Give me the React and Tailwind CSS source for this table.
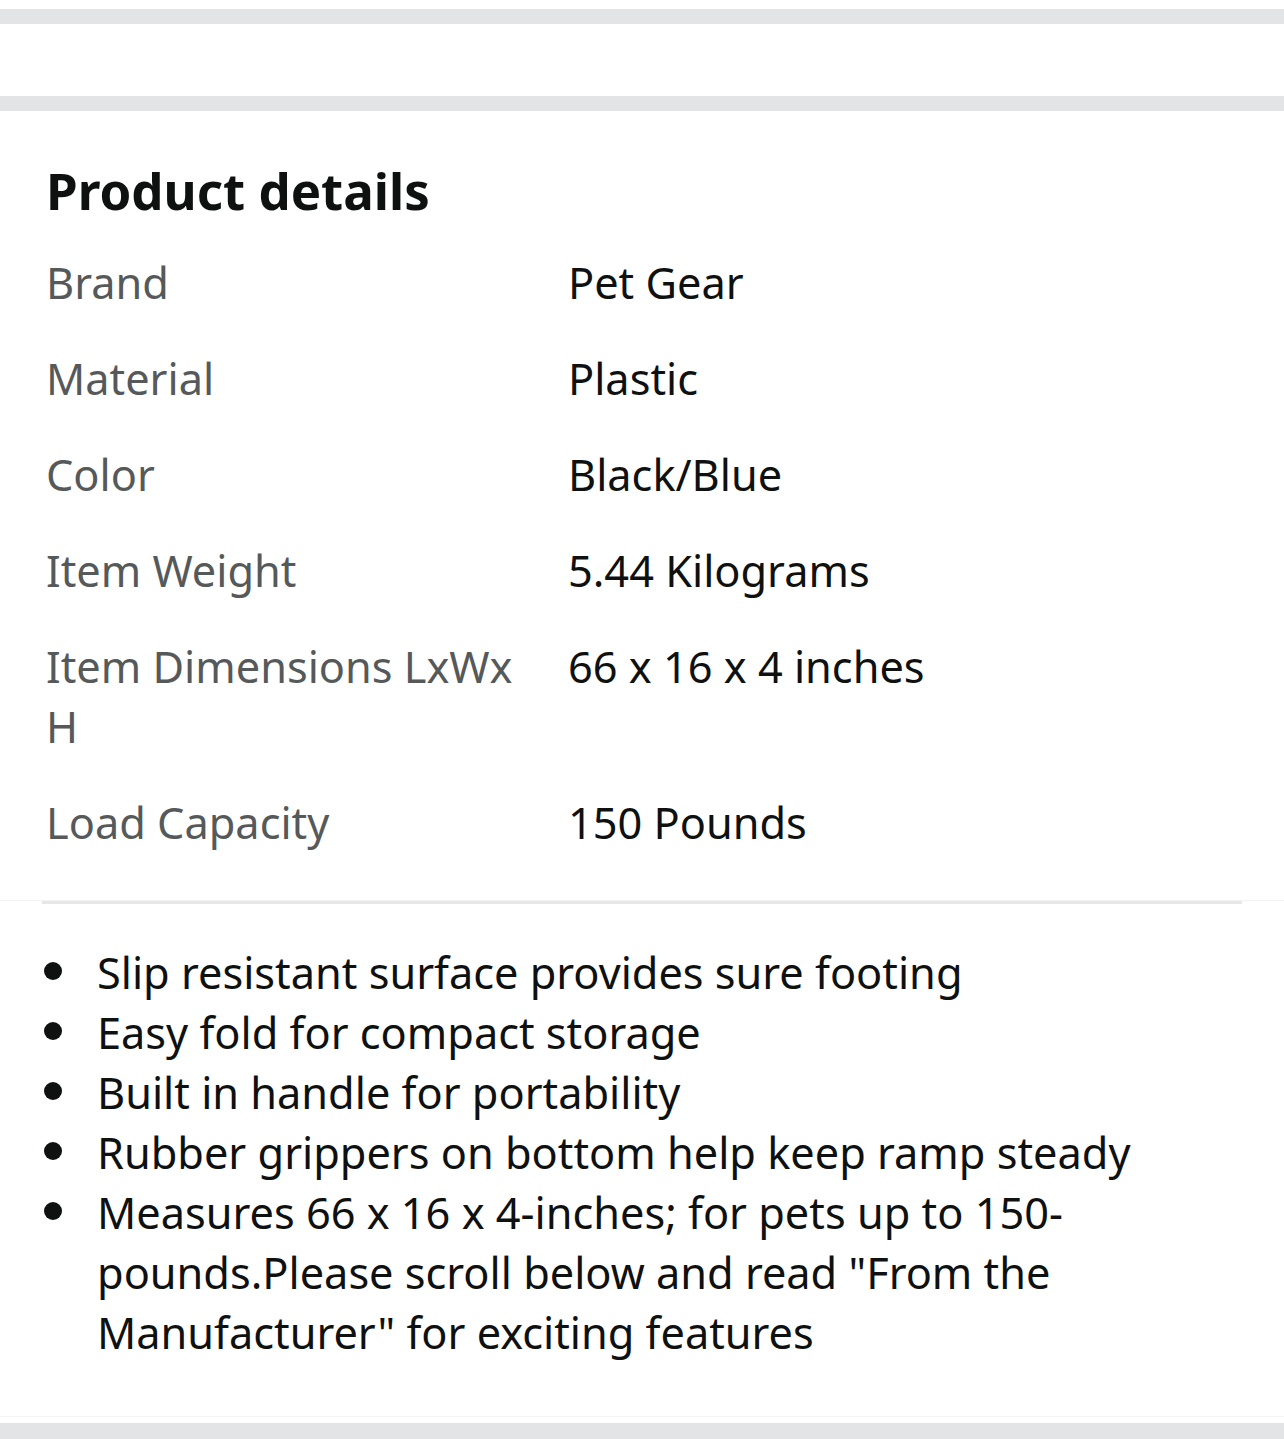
const rows = [
  ["Brand", "Pet Gear"],
  ["Material", "Plastic"],
  ["Color", "Black/Blue"],
  ["Item Weight", "5.44 Kilograms"],
  ["Item Dimensions LxWx H", "66 x 16 x 4 inches"],
  ["Load Capacity", "150 Pounds"],
];

const bullets = [
  "Slip resistant surface provides sure footing",
  "Easy fold for compact storage",
  "Built in handle for portability",
  "Rubber grippers on bottom help keep ramp steady",
  'Measures 66 x 16 x 4-inches; for pets up to 150-pounds.Please scroll below and read "From the Manufacturer" for exciting features',
];

export default function App() {
  return (
    <div className="w-[1284px] h-[1439px] bg-white font-['Noto_Sans',sans-serif] overflow-hidden flex flex-col">
      <div className="h-[9px]" />
      <div className="h-[15px] bg-[#e3e4e6]" />
      <div className="h-[72px]" />
      <div className="h-[15px] bg-[#e3e4e6]" />

      {/* Product details */}
      <section className="px-[46px] pt-[51px]">
        <h2 className="text-[51px] leading-[56px] font-bold text-[#0f1111]">Product details</h2>
        <table className="mt-[35px] border-collapse">
          <tbody>
            {rows.map(([label, value]) => (
              <tr key={label}>
                <td className="w-[522px] pr-[40px] pb-[36px] align-top text-[43.3px] leading-[60px] text-[#565959]">
                  {label}
                </td>
                <td className="pb-[36px] align-top text-[43.3px] leading-[60px] text-[#0f1111]">{value}</td>
              </tr>
            ))}
          </tbody>
        </table>
      </section>

      <div className="mt-[11px] h-px bg-[#f3f3f3]" />
      <div className="mx-[42px] h-[3px] bg-[#e7e7e7]" />

      <ul className="pl-[44px] pr-[60px] pt-[39px]">
        {bullets.map((b) => (
          <li key={b} className="flex text-[43.3px] leading-[60px] text-[#0f1111]">
            <span className="w-[53px] shrink-0 flex items-center h-[56px]">
              <span className="w-[18px] h-[18px] rounded-full bg-[#0f1111]" />
            </span>
            <span>{b}</span>
          </li>
        ))}
      </ul>

      <div className="flex-1" />
      <div className="h-px bg-[#f5f5f5]" />
      <div className="h-[6px]" />
      <div className="h-[16px] bg-[#e3e4e6]" />
    </div>
  );
}
